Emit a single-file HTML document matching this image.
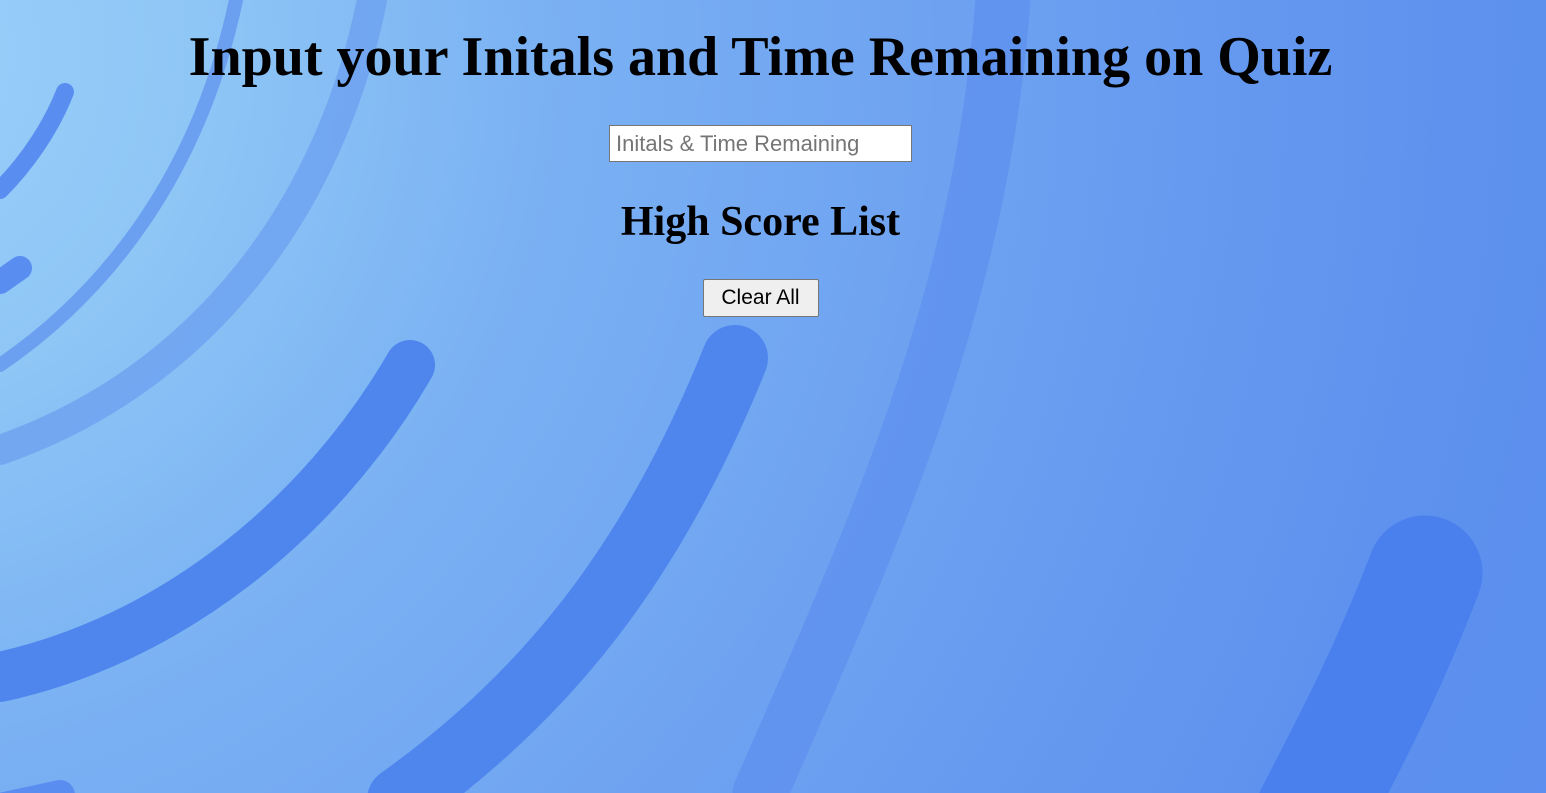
<!DOCTYPE html>
<html><head><meta charset="utf-8"><style>
html,body{margin:0;padding:0;width:1546px;height:793px;overflow:hidden}
body{position:relative;font-family:"Liberation Serif",serif;
background:radial-gradient(circle at -150px 50px,#9bd0fa 0px,#8ec6f6 350px,#7ab1f3 700px,#6ea2f1 1100px,#5e92ee 1600px,#5a8def 2000px)}
svg{position:absolute;left:0;top:0}
.c{position:relative;text-align:center;width:1521px}
h1{margin:0;padding-top:26px;font-size:56px;font-weight:bold;line-height:62px}
input{display:block;margin:37px auto 0;width:289px;height:35px;box-sizing:content-box;padding:0 6px;border:1px solid #767676;font-family:"Liberation Sans",sans-serif;font-size:22px;background:#fff}
input::placeholder{color:#757575}
h2{margin:33px 0 0;font-size:42px;line-height:54px}
button{margin-top:30px;width:116px;height:38px;font-family:"Liberation Sans",sans-serif;font-size:21px;background:#efefef;border:1px solid #767676;border-radius:2px;color:#000}
</style></head><body>
<svg width="1546" height="793" viewBox="0 0 1546 793">
<g fill="none" stroke-linecap="round">
<path d="M236 0 C200 170 110 290 0 365" stroke="#6b9ff0" stroke-width="14"/>
<path d="M372 0 C330 210 200 380 0 450" stroke="#6a9cf0" stroke-width="30" opacity=".7"/>
<path d="M1003 0 C980 300 880 520 760 793" stroke="#5a8cee" stroke-width="55" opacity=".6"/>
<path d="M65 92 C50 130 25 165 0 190" stroke="#5a8df0" stroke-width="18"/>
<path d="M20 268 L0 282" stroke="#5a8df0" stroke-width="24"/>
<path d="M410 365 C320 520 170 640 0 677" stroke="#4f86ee" stroke-width="50"/>
<path d="M735 358 C650 570 540 700 400 800" stroke="#4f86ee" stroke-width="66"/>
<path d="M1425 573 C1380 690 1340 760 1310 820" stroke="#4a7fee" stroke-width="115"/>
<path d="M60 795 L0 808" stroke="#5a8df0" stroke-width="30"/>
</g></svg>
<div class="c">
<h1>Input your Initals and Time Remaining on Quiz</h1>
<input placeholder="Initals &amp; Time Remaining">
<h2>High Score List</h2>
<button>Clear All</button>
</div>
</body></html>
